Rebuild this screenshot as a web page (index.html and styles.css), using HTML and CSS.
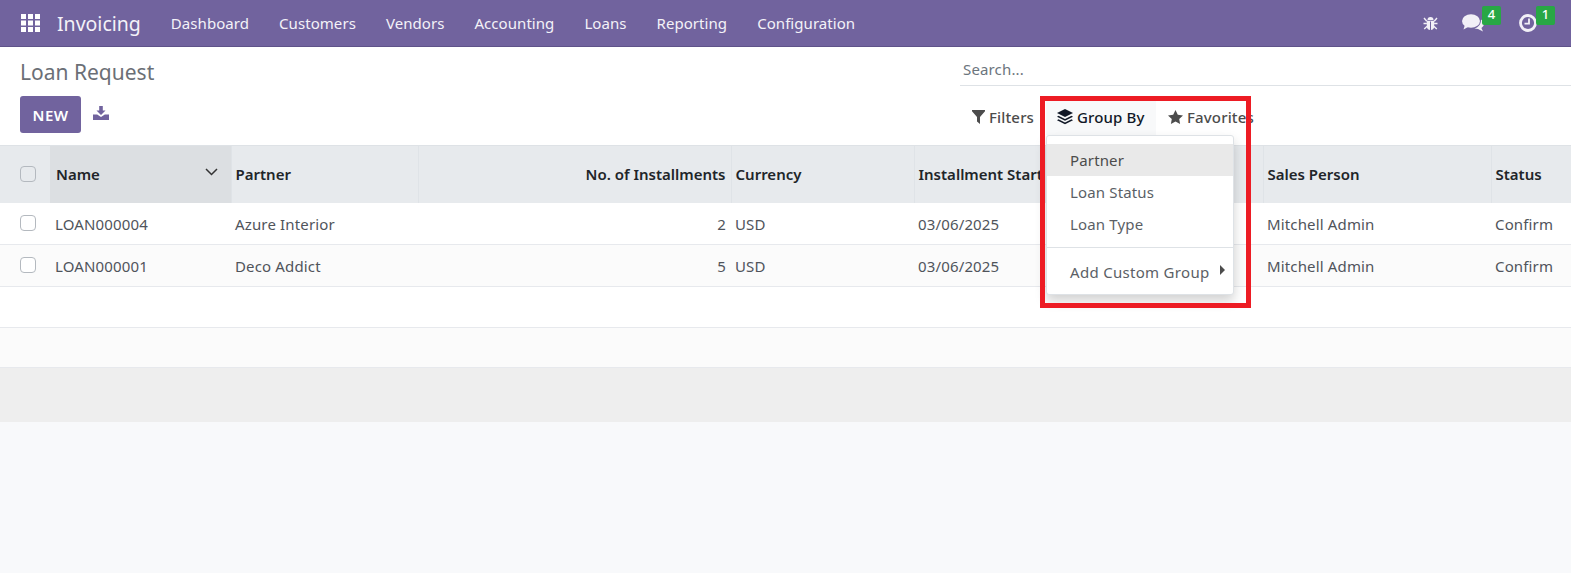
FILE: index.html
```html
<!DOCTYPE html>
<html lang="en">
<head>
    <meta charset="UTF-8">
    <meta name="viewport" content="width=device-width, initial-scale=1.0">
    <title>Loan Request</title>
    <link rel="stylesheet" href="styles.css">
</head>
<body>
    <header class="navbar">
        <svg class="nav-apps" width="19" height="18" viewBox="0 0 19 18" fill="#fff">
            <rect x="0" y="0" width="5" height="5"/><rect x="7" y="0" width="5" height="5"/><rect x="14" y="0" width="5" height="5"/>
            <rect x="0" y="6.5" width="5" height="5"/><rect x="7" y="6.5" width="5" height="5"/><rect x="14" y="6.5" width="5" height="5"/>
            <rect x="0" y="13" width="5" height="5"/><rect x="7" y="13" width="5" height="5"/><rect x="14" y="13" width="5" height="5"/>
        </svg>
        <span class="nav-brand">Invoicing</span>
        <nav class="nav-menu">
            <a>Dashboard</a>
            <a>Customers</a>
            <a>Vendors</a>
            <a>Accounting</a>
            <a>Loans</a>
            <a>Reporting</a>
            <a>Configuration</a>
        </nav>
        <div class="nav-tools">
            <svg class="tool-bug" width="15" height="16" viewBox="0 0 15 15">
                <path d="M4.5 4.5a3 3 0 0 1 6 0z" fill="#f2f0f7"/>
                <path d="M3.8 5.2h7.4v5a3.7 4.3 0 0 1-7.4 0z" fill="#f2f0f7"/>
                <path d="M7.5 6v8.5" stroke="#71639e" stroke-width="1"/>
                <path d="M1 2.5l2.8 3.2M14 2.5l-2.8 3.2M.5 8h3.4M14.5 8h-3.4M1.2 13.5l3-2.7M13.800 13.5l-3-2.7" stroke="#f2f0f7" stroke-width="1.4" fill="none"/>
            </svg>
            <div class="tool-item tool-chat">
                <svg width="22" height="18" viewBox="0 0 22 18" fill="#f2f0f7">
                    <ellipse cx="9" cy="7" rx="9" ry="6.800"/>
                    <path d="M3 10.500l-1.500 5 5.500-3z"/>
                    <path d="M19 5.500c1.900 1.100 3 2.600 3 4.300 0 1.700-1 3.200-2.600 4.200l1.600 3.500-5-2.600c-1.300 0-2.500-.2-3.600-.6 3.700-.6 6.600-3.800 6.600-8.300z"/>
                </svg>
                <span class="tool-badge">4</span>
            </div>
            <div class="tool-item tool-clock">
                <svg width="18" height="18" viewBox="0 0 18 18" fill="none" stroke="#f2f0f7">
                    <circle cx="9" cy="9" r="7.500" stroke-width="2.800"/>
                    <path d="M10 4.500v5.200H5.500" stroke-width="1.800"/>
                </svg>
                <span class="tool-badge">1</span>
            </div>
        </div>
    </header>

    <section class="control-panel">
        <div class="panel-left">
            <h1 class="page-title">Loan Request</h1>
            <div class="panel-actions">
                <button type="button" class="btn-new">NEW</button>
                <svg class="icon-download" width="16" height="14" viewBox="0 0 16 14" fill="#71639e">
                    <path d="M6.200 0h3.600v4.500h2.700L8 9 3.500 4.500h2.700z"/>
                    <path d="M0 8.500h4.200L8 11l3.800-2.500H16V14H0z"/>
                </svg>
            </div>
        </div>
        <div class="panel-right">
            <div class="search-box">Search...</div>
            <div class="search-options">
                <button type="button" class="opt-btn opt-filter">
                    <svg width="13" height="14" viewBox="0 0 13 14" fill="#4c4c4c"><path d="M0 0h13v1.200L8 7v7l-3-2.500V7L0 1.200z"/></svg>
                    Filters
                </button>
                <button type="button" class="opt-btn opt-active">
                    <svg width="16" height="16" viewBox="0 0 16 16" fill="#111827">
                        <path d="M8 0l8 4-8 4-8-4z"/>
                        <path d="M1.500 6.800L8 10l6.500-3.200L16 7.800 8 11.800 0 7.800z"/>
                        <path d="M1.500 10.300L8 13.500l6.500-3.200 1.500 1-8 4-8-4z"/>
                    </svg>
                    Group By
                </button>
                <button type="button" class="opt-btn">
                    <svg width="15" height="14" viewBox="0 0 15 14" fill="#4c4c4c"><path d="M7.500 0l2.300 4.700 5.200.7-3.800 3.600.9 5-4.600-2.400L2.900 14l.9-5L0 5.400l5.200-.7z"/></svg>
                    Favorites
                </button>
            </div>
        </div>
    </section>

    <div class="group-menu">
        <div class="group-item group-item-hover">Partner</div>
        <div class="group-item">Loan Status</div>
        <div class="group-item">Loan Type</div>
        <div class="group-divider"></div>
        <div class="group-item group-custom">Add Custom Group <span class="caret-right"></span></div>
    </div>
    <div class="highlight-box"></div>

    <table class="list-table">
        <colgroup>
            <col class="col-check">
            <col class="col-name">
            <col class="col-partner">
            <col class="col-count">
            <col class="col-currency">
            <col class="col-date">
            <col class="col-sales">
            <col>
        </colgroup>
        <thead>
            <tr>
                <th class="cell-check"><span class="check-box"></span></th>
                <th class="th-sorted">Name
                    <svg class="sort-icon" width="13" height="8" viewBox="0 0 13 8" fill="none" stroke="#333" stroke-width="1.500"><path d="M1 1l5.500 5.500L12 1"/></svg>
                </th>
                <th>Partner</th>
                <th class="num">No. of Installments</th>
                <th>Currency</th>
                <th>Installment Start Date</th>
                <th>Sales Person</th>
                <th>Status</th>
            </tr>
        </thead>
        <tbody>
            <tr>
                <td class="cell-check"><span class="check-box"></span></td>
                <td class="cell-name">LOAN000004</td>
                <td>Azure Interior</td>
                <td class="num">2</td>
                <td>USD</td>
                <td>03/06/2025</td>
                <td>Mitchell Admin</td>
                <td>Confirm</td>
            </tr>
            <tr>
                <td class="cell-check"><span class="check-box"></span></td>
                <td class="cell-name">LOAN000001</td>
                <td>Deco Addict</td>
                <td class="num">5</td>
                <td>USD</td>
                <td>03/06/2025</td>
                <td>Mitchell Admin</td>
                <td>Confirm</td>
            </tr>
            <tr class="row-empty"><td colspan="8"></td></tr>
            <tr class="row-empty"><td colspan="8"></td></tr>
        </tbody>
        <tfoot>
            <tr><td colspan="8"></td></tr>
        </tfoot>
    </table>
</body>
</html>
```

FILE: styles.css
```css
html, body {
    height: 100%;
}
body {
    margin: 0;
    background-color: #f8f9fb;
    font-family: "Noto Sans", sans-serif;
    font-size: 15px;
    letter-spacing: 0.15px;
    color: #4c4c4c;
    position: relative;
    overflow: hidden;
}
.navbar {
    height: 46px;
    background-color: #71639e;
    border-bottom: 1px solid #5f5389;
    display: flex;
    align-items: center;
    color: #fff;
}
.nav-apps {
    margin-left: 21px;
}
.nav-brand {
    margin-left: 17px;
    font-size: 19.5px;
    letter-spacing: 0;
    color: #f4f2f8;
}
.nav-menu {
    display: flex;
    margin-left: 15px;
}
.nav-menu a {
    padding: 0 15px;
    font-size: 15px;
    letter-spacing: 0.06px;
    color: #f4f2f8;
}
.nav-tools {
    margin-left: auto;
    display: flex;
    align-items: center;
    padding-right: 34px;
}
.tool-bug {
    margin-right: 24px;
}
.tool-item {
    position: relative;
    display: flex;
}
.tool-chat {
    margin-right: 35px;
}
.tool-badge {
    position: absolute;
    top: -8px;
    right: -17px;
    width: 19px;
    height: 19px;
    border-radius: 2px;
    background-color: #28a745;
    color: #fff;
    font-size: 13px;
    font-weight: 500;
    line-height: 17px;
    text-align: center;
}
.tool-clock .tool-badge {
    right: -18px;
}

.control-panel {
    height: 98px;
    background-color: #fff;
    display: flex;
    justify-content: space-between;
}
.panel-left {
    padding-left: 20px;
}
.page-title {
    margin: 10px 0 0;
    font-size: 21px;
    font-weight: 400;
    letter-spacing: 0;
    line-height: 30px;
    color: #6b6f76;
}
.panel-actions {
    margin-top: 9px;
    display: flex;
    align-items: flex-start;
}
.btn-new {
    width: 61px;
    height: 37px;
    border: none;
    border-radius: 3px;
    background-color: #71639e;
    color: #fff;
    font-family: inherit;
    font-size: 15px;
    font-weight: 600;
    letter-spacing: 0.4px;
}
.icon-download {
    margin: 10px 0 0 12px;
}
.panel-right {
    width: 611px;
}
.search-box {
    height: 39px;
    box-sizing: border-box;
    border-bottom: 1px solid #dee2e6;
    padding: 12px 0 0 3px;
    color: #6c757d;
    line-height: 20px;
}
.search-options {
    margin-top: 15px;
    display: flex;
}
.opt-btn {
    height: 34px;
    padding: 0 11px 2px 12px;
    border: none;
    background: none;
    font-family: inherit;
    font-size: 15px;
    font-weight: 500;
    letter-spacing: 0.15px;
    color: #4c4c4c;
    display: flex;
    align-items: center;
    gap: 4px;
    white-space: nowrap;
}
.opt-filter {
    width: 86px;
}
.opt-active {
    width: 110px;
    padding: 0 0 2px 11px;
    background-color: #f8f9fa;
    color: #111827;
}

.list-table {
    width: 100%;
    border-collapse: collapse;
    table-layout: fixed;
    background-color: #fff;
}
.col-check { width: 50px; }
.col-name { width: 181px; }
.col-partner { width: 187px; }
.col-count { width: 313px; }
.col-currency { width: 183px; }
.col-date { width: 349px; }
.col-sales { width: 228px; }
.list-table th {
    height: 55px;
    padding: 0 5px 2px 4px;
    background-color: #e7eaed;
    border-top: 1px solid #dee2e6;
    border-left: 1px solid #dfe3e7;
    text-align: left;
    font-weight: 600;
    letter-spacing: 0;
    color: #212529;
    white-space: nowrap;
    overflow: hidden;
    position: relative;
}
.list-table th:first-child {
    border-left: none;
}
.list-table th.th-sorted {
    background-color: #dcdfe2;
    border-left: none;
    padding-left: 6px;
}
.list-table th.num, .list-table td.num {
    text-align: right;
}
.sort-icon {
    position: absolute;
    top: 22px;
    right: 13px;
}
.list-table td {
    height: 41px;
    padding: 0 5px 0 4px;
    border-bottom: 1px solid #e7e9ed;
    white-space: nowrap;
    color: #50545b;
}
.list-table td.cell-name {
    padding-left: 5px;
}
.list-table tbody tr:nth-child(even) {
    background-color: #fbfbfb;
}
.list-table td.cell-check, .list-table th.cell-check {
    padding: 0 0 2px 20px;
    line-height: 0;
}
.list-table td.cell-check {
    height: 39px;
}
.check-box {
    display: inline-block;
    width: 14px;
    height: 14px;
    border: 1px solid #b4b9bf;
    border-radius: 4px;
    background-color: #fff;
}
th .check-box {
    background-color: #e7eaed;
}
.row-empty td {
    height: 40px;
}
.row-empty + .row-empty td {
    height: 39px;
}
.list-table tfoot td {
    height: 54px;
    padding: 0;
    border: none;
    background-color: #eeeeee;
}

.group-menu {
    position: absolute;
    top: 135px;
    left: 1046px;
    width: 188px;
    height: 160px;
    box-sizing: border-box;
    padding-top: 8px;
    background-color: #fff;
    border: 1px solid #dee2e6;
    border-radius: 3px;
    box-shadow: 0 6px 12px rgba(0, 0, 0, 0.18);
    z-index: 5;
}
.group-item {
    height: 32px;
    line-height: 32px;
    padding-left: 23px;
    color: #5b5f66;
}
.group-item-hover {
    background-color: #e9e9e9;
    color: #4c4c4c;
}
.group-divider {
    margin-top: 7px;
    border-top: 1px solid #dee2e6;
}
.group-custom {
    margin-top: 8px;
    letter-spacing: 0.3px;
    position: relative;
}
.caret-right {
    position: absolute;
    top: 9px;
    right: 8px;
    border-left: 5px solid #4c4c4c;
    border-top: 5px solid transparent;
    border-bottom: 5px solid transparent;
}
.highlight-box {
    position: absolute;
    top: 96px;
    left: 1040px;
    width: 211px;
    height: 212px;
    box-sizing: border-box;
    border: 5px solid #ed1c24;
    z-index: 6;
}
```
